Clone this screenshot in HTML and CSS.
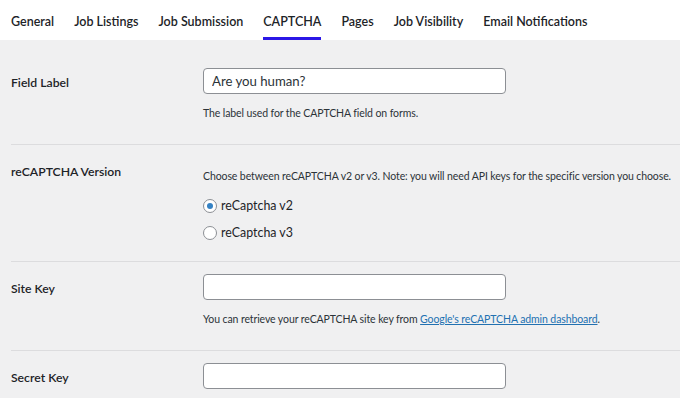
FILE: index.html
```html
<!DOCTYPE html>
<html lang="en">
<head>
  <meta charset="UTF-8" />
  <meta name="viewport" content="width=device-width, initial-scale=1" />
  <title>CAPTCHA Settings</title>
  <link rel="stylesheet" href="styles.css">
</head>
<body>

  <nav class="tabs">
    <a class="tab" href="#">General</a>
    <a class="tab" href="#">Job Listings</a>
    <a class="tab" href="#">Job Submission</a>
    <a class="tab active" href="#">CAPTCHA</a>
    <a class="tab" href="#">Pages</a>
    <a class="tab" href="#">Job Visibility</a>
    <a class="tab" href="#">Email Notifications</a>
  </nav>

  <div class="settings">

    <div class="row">
      <div class="label">Field Label</div>
      <div class="field">
        <input class="text-input" type="text" value="Are you human?">
        <p class="desc">The label used for the CAPTCHA field on forms.</p>
      </div>
    </div>

    <div class="row row-radios">
      <div class="label">reCAPTCHA Version</div>
      <div class="field">
        <p class="desc">Choose between reCAPTCHA v2 or v3. Note: you will need API keys for the specific version you choose.</p>
        <div class="radios">
          <label class="radio"><span class="dot checked"></span>reCaptcha v2</label>
          <label class="radio"><span class="dot"></span>reCaptcha v3</label>
        </div>
      </div>
    </div>

    <div class="row">
      <div class="label">Site Key</div>
      <div class="field">
        <input class="text-input" type="text" value="">
        <p class="desc">You can retrieve your reCAPTCHA site key from <a href="#">Google's reCAPTCHA admin dashboard</a>.</p>
      </div>
    </div>

    <div class="row">
      <div class="label">Secret Key</div>
      <div class="field">
        <input class="text-input" type="text" value="">
      </div>
    </div>

  </div>

</body>
</html>
```

FILE: styles.css
```css
* {
  box-sizing: border-box;
  margin: 0;
  padding: 0;
}

body {
  background: #f0f0f1;
  color: #1d2327;
  font-family: 'Lato', sans-serif;
  font-size: 13px;
  overflow: hidden;
}

.tabs {
  background: #fff;
  height: 40px;
  display: flex;
  gap: 20px;
  padding-left: 11px;
}

.tab {
  display: flex;
  align-items: center;
  padding-top: 6px;
  height: 40px;
  color: #1d2327;
  text-decoration: none;
  font-weight: 600;
  font-size: 12.5px;
  border-bottom: 3px solid transparent;
}

.tab.active {
  border-bottom-color: #2b17e6;
}

.settings {
  padding: 16px 0 0 11px;
}

.row {
  display: flex;
  padding: 12px 0 23px;
  border-bottom: 1px solid #dcdcde;
}

.label {
  width: 192px;
  flex-shrink: 0;
  padding-top: 5px;
  line-height: 20px;
  font-weight: 600;
  font-size: 12.2px;
}

.text-input {
  display: block;
  width: 303px;
  height: 26px;
  padding: 0 8px;
  border: 1px solid #8c8f94;
  border-radius: 4px;
  background: #fff;
  font-family: inherit;
  font-size: 13.2px;
  color: #2c3338;
}

.desc {
  margin-top: 11px;
  line-height: 16px;
  font-size: 10.5px;
  letter-spacing: -0.1px;
  color: #2c3338;
  white-space: nowrap;
}

.desc a {
  color: #2271b1;
}

.row-radios {
  padding-bottom: 18px;
}

.radios {
  margin-top: 12px;
  display: flex;
  flex-direction: column;
  gap: 7px;
}

.radio {
  display: flex;
  align-items: center;
  gap: 4px;
  line-height: 20px;
  font-size: 12.4px;
}

.dot {
  width: 14px;
  height: 14px;
  border: 1px solid #8c8f94;
  border-radius: 50%;
  background: #fff;
  position: relative;
}

.dot.checked::after {
  content: '';
  position: absolute;
  top: 3px;
  left: 3px;
  width: 6px;
  height: 6px;
  border-radius: 50%;
  background: #3582c4;
}
```
